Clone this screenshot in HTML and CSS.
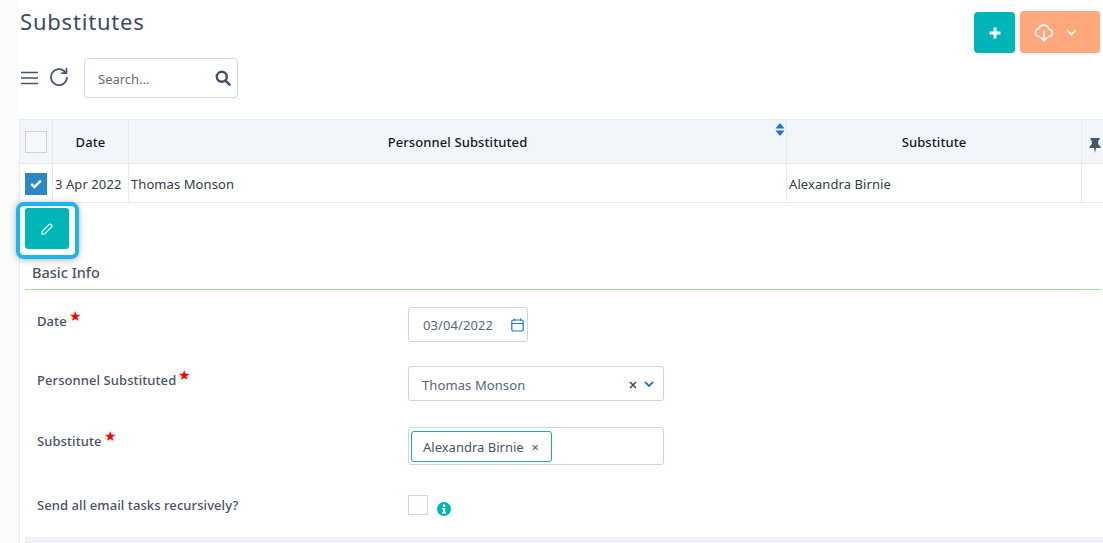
FILE: index.html
```html
<!DOCTYPE html>
<html lang="en">
<head>
<meta charset="utf-8">
<title>Substitutes</title>
<link rel="stylesheet" href="styles.css">
</head>
<body>
<div class="page">
  <header class="top">
    <h1 class="title">Substitutes</h1>
    <div class="actions">
      <button class="btn-add" type="button" aria-label="Add">
        <svg width="12" height="12" viewBox="0 0 12 12"><path d="M6 .5v11M.5 6h11" stroke="#fff" stroke-width="3"/></svg>
      </button>
      <button class="btn-export" type="button" aria-label="Export">
        <svg width="20" height="18" viewBox="0 0 20 18" fill="none" stroke="#fff" stroke-width="1.6" stroke-linecap="round" stroke-linejoin="round"><path d="M5.500 12.500H5A4 4 0 0 1 4.600 4.600 5.500 5.500 0 0 1 15 5.200a3.700 3.700 0 0 1 .5 7.300H15"/><path d="M10 7.500v9M7.200 13.800 10 16.600l2.800-2.800"/></svg>
        <svg width="11" height="7" viewBox="0 0 11 7" fill="none" stroke="#fff" stroke-width="1.6"><path d="M1 1l4.500 4.500L10 1"/></svg>
      </button>
    </div>
  </header>

  <div class="toolbar">
    <svg class="menu-icon" width="17" height="14" viewBox="0 0 17 14" fill="none" stroke="#46566f" stroke-width="1.7"><path d="M0 1.500h17M0 7h17M0 12.500h17"/></svg>
    <svg class="refresh-icon" width="20" height="20" viewBox="0 0 20 20" fill="none" stroke="#46566f" stroke-width="1.7" stroke-linecap="round" stroke-linejoin="round"><path d="M16.500 5.500A8 8 0 1 0 18 10.500"/><path d="M17.500 1.500v4.600h-4.600"/></svg>
    <div class="search">
      <span class="search-text">Search...</span>
      <svg width="16" height="16" viewBox="0 0 16 16" fill="none" stroke="#3d4f68" stroke-width="2.4" stroke-linecap="round"><circle cx="6.800" cy="6.800" r="5"/><path d="M10.800 10.800 14.600 14.600"/></svg>
    </div>
  </div>

  <div class="grid">
    <div class="cell head c-check"><span class="box-empty"></span></div>
    <div class="cell head c-date">Date</div>
    <div class="cell head c-person">Personnel Substituted
      <svg class="sort" width="10" height="13" viewBox="0 0 10 13" fill="#1a73e8"><path d="M5 0l4.500 5.500H.5zM5 13 .5 7.500h9z"/></svg>
    </div>
    <div class="cell head c-sub">Substitute</div>
    <div class="cell head c-pin">
      <svg class="pin" width="12" height="15" viewBox="0 0 12 15" fill="#46566f"><path d="M1.500 0h9v2l-1.300.6v3.600L11.500 8.500V10H7L6 15 5 10H.5V8.500L2.800 6.200V2.600L1.500 2z"/></svg>
    </div>
    <div class="cell row c-check"><span class="box-checked"><svg width="12" height="10" viewBox="0 0 12 10" fill="none" stroke="#fff" stroke-width="2.400"><path d="M1.200 5l3.200 3L10.800 1.600"/></svg></span></div>
    <div class="cell row c-date">3 Apr 2022</div>
    <div class="cell row c-person">Thomas Monson</div>
    <div class="cell row c-sub">Alexandra Birnie</div>
    <div class="cell row c-pin"></div>
  </div>

  <section class="detail">
    <div class="edit-wrap">
      <button class="btn-edit" type="button" aria-label="Edit">
        <svg width="14" height="14" viewBox="0 0 14 14" fill="none" stroke="#fff" stroke-width="1.200" stroke-linejoin="round"><path d="M1.800 12.200l.6-3L9.200 2.400a1.200 1.200 0 0 1 1.700 0l.7.7a1.200 1.200 0 0 1 0 1.700L4.800 11.600z"/></svg>
      </button>
    </div>
    <h2 class="section-title">Basic Info</h2>
    <form class="form">
      <div class="form-row row-date">
        <label class="label">Date<span class="star">★</span></label>
        <div class="input input-date">
          <span>03/04/2022</span>
          <svg width="13" height="14" viewBox="0 0 13 14" fill="none" stroke="#1a73e8" stroke-width="1.200"><rect x=".8" y="2" width="11.400" height="11" rx="1.500"/><path d="M.8 5.500h11.400M3.500.5v2.500M9.500.5v2.500"/></svg>
        </div>
      </div>
      <div class="form-row row-person">
        <label class="label">Personnel Substituted<span class="star">★</span></label>
        <div class="input input-select">
          <span class="select-value">Thomas Monson</span>
          <span class="select-icons">
            <svg width="8" height="8" viewBox="0 0 8 8" stroke="#3d4f68" stroke-width="1.600"><path d="M1 1l6 6M7 1 1 7"/></svg>
            <svg width="10" height="7" viewBox="0 0 10 7" fill="none" stroke="#1a73e8" stroke-width="1.800"><path d="M1 1l4 4 4-4"/></svg>
          </span>
        </div>
      </div>
      <div class="form-row row-sub">
        <label class="label">Substitute<span class="star">★</span></label>
        <div class="input input-tags">
          <span class="tag">Alexandra Birnie<span class="tag-x">×</span></span>
        </div>
      </div>
      <div class="form-row row-send">
        <label class="label">Send all email tasks recursively?</label>
        <div class="send-control">
          <span class="box-plain"></span>
          <svg class="info" width="14" height="14" viewBox="0 0 14 14"><circle cx="7" cy="7" r="7" fill="#00b5b8"/><rect x="5.900" y="2.600" width="2.300" height="2.200" fill="#fff"/><path d="M5 6h3.200v4.200H9.200v1.300H5v-1.300h1V7.300H5z" fill="#fff"/></svg>
        </div>
      </div>
    </form>
    <div class="footer-bar"></div>
  </section>
</div>
</body>
</html>
```
FILE: styles.css
```css
* { box-sizing: border-box; }
html, body { margin: 0; padding: 0; height: 543px; overflow: hidden; background: #fff; }
body { font-family: "Noto Sans", "Open Sans", sans-serif; color: #46566f; background: linear-gradient(to right, #fbfbfc 0, #fbfbfc 19px, #fff 19px); }
.page { padding-left: 19px; height: 543px; overflow: hidden; }
button { border: 0; padding: 0; cursor: pointer; }

.top { display: flex; justify-content: space-between; height: 58px; }
.title { margin: 6px 0 0 1px; font-size: 22px; line-height: 30px; font-weight: 400; letter-spacing: .8px; color: #3b4a68; }
.actions { display: flex; gap: 5px; margin: 11px 3px 0 0; align-items: flex-start; }
.btn-add { width: 41px; height: 41px; margin-top: 1px; border-radius: 4px; background: #00b5b8; display: flex; align-items: center; justify-content: center; }
.btn-export { width: 80px; height: 42px; border-radius: 4px; background: #ffa87d; display: flex; align-items: center; gap: 12px; padding: 1px 0 0 14px; }

.toolbar { display: flex; align-items: center; height: 40px; padding-left: 2px; }
.menu-icon { margin-right: 11px; }
.refresh-icon { margin-right: 15px; margin-top: -2px; }
.search { width: 154px; height: 40px; border: 1px solid #ccd6e6; border-radius: 4px; display: flex; align-items: center; justify-content: space-between; padding: 0 6px 0 13px; }
.search-text { font-size: 13px; color: #5f6b7e; padding-top: 2px; }

.grid { display: grid; grid-template-columns: 34px 76px 658px 295px 22px; grid-template-rows: 44px 39px; margin-top: 21px; border-top: 1px solid #e4ebf3; }
.cell { border-right: 1px solid #e4ebf3; border-bottom: 1px solid #e4ebf3; display: flex; align-items: center; font-size: 13px; letter-spacing: .08px; color: #333c4a; }
.cell:nth-child(5n+1) { border-left: 1px solid #e4ebf3; }
.head { background: #f2f6fa; color: #111827; font-weight: 500; letter-spacing: .1px; justify-content: center; position: relative; }
.row { padding: 2px 0 0 2px; white-space: nowrap; }
.c-check { justify-content: center; padding: 0; }
.c-pin { justify-content: flex-start; padding: 0 0 0 7px; }
.pin { margin-top: 8px; }
.row.c-check { border-bottom: 0; padding: 0 1px 0 0; }
.box-empty { width: 22px; height: 22px; border: 1px solid #d2d2d2; background: #f6f7f9; }
.box-checked { width: 22px; height: 22px; background: #2a88c8; display: flex; align-items: center; justify-content: center; }
.sort { position: absolute; right: 1px; top: 3px; }

.detail { border-left: 1px solid #e4ebf3; height: 341px; padding-left: 5px; position: relative; }
.edit-wrap { display: flex; width: 63px; height: 57px; margin: -1px 0 0 -9px; padding: 2px 0 0 5px; border: 4px solid #18b7ef; border-radius: 8px; box-shadow: 0 1px 7px rgba(0,0,0,.3); background: #fff; position: relative; }
.btn-edit { width: 44px; height: 41px; border-radius: 3px; background: #00b5b8; display: flex; align-items: center; justify-content: center; }
.section-title { margin: 3px 0 0; padding: 0 0 7px 7px; width: 1075px; font-size: 14.500px; line-height: 20px; font-weight: 500; color: #4d5466; border-bottom: 1px solid #98e498; }

.form { padding: 0 0 0 12px; }
.form-row { display: flex; position: relative; }
.label { width: 371px; font-size: 13px; font-weight: 500; letter-spacing: .08px; color: #4a5268; white-space: nowrap; }
.row-date .label { color: #3f4d69; }
.star { color: #f00; font-size: 14px; line-height: 1; position: relative; top: -5px; left: 2px; }
.row-date { margin-top: 17px; height: 35px; }
.row-date .label { padding-top: 5px; }
.row-person { margin-top: 24px; height: 35px; }
.row-person .label { padding-top: 5px; }
.row-sub { margin-top: 26px; height: 38px; }
.row-sub .label { padding-top: 5px; }
.row-send { margin-top: 30px; height: 30px; }
.row-send .label { padding-top: 1px; }
.input { border: 1px solid #ccd6e6; border-radius: 3px; font-size: 13px; letter-spacing: .1px; color: #56657f; display: flex; align-items: center; }
.input-date { width: 120px; height: 35px; justify-content: space-between; padding: 0 3px 0 14px; }
.input-select { width: 256px; height: 35px; justify-content: space-between; padding: 0 9px 0 13px; }
.select-value { padding-top: 2px; }
.select-icons { display: flex; align-items: center; gap: 7px; padding-top: 2px; }
.input-tags { width: 256px; height: 38px; padding: 0 0 0 2px; }
.tag { height: 31px; width: 141px; border: 1px solid #1ea9ad; border-radius: 3px; display: flex; align-items: center; padding: 2px 0 0 11px; color: #46566f; white-space: nowrap; letter-spacing: 0; }
.tag-x { margin-left: 8px; font-size: 13px; }
.send-control { display: flex; }
.box-plain { width: 20px; height: 20px; border: 1px solid #ccd6e6; }
.info { margin: 7px 0 0 9px; }
.footer-bar { position: absolute; left: 5px; right: 0; bottom: 0; height: 6px; background: #eef0f5; }
```
